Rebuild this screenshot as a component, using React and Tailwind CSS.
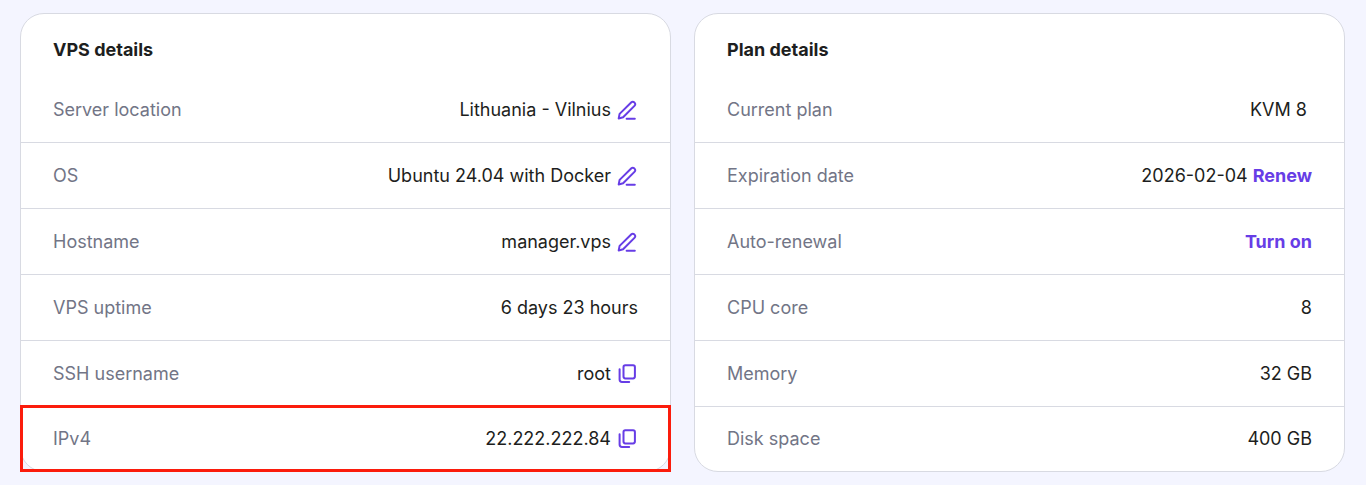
import React from "react";

const EditIcon = () => (
  <svg
    width="22"
    height="22"
    viewBox="0 0 22 22"
    fill="none"
    stroke="currentColor"
    strokeWidth="2"
    strokeLinecap="round"
    strokeLinejoin="round"
    aria-hidden="true"
  >
    <path d="M2.7 19.5 L3.6 14.9 L15.4 3.3 a1.9 1.9 0 0 1 2.7 0 l.6.6 a1.9 1.9 0 0 1 0 2.7 L7.1 18.3 Z" />
    <path d="M10.6 19.7 H18.8" />
  </svg>
);

const CopyIcon = () => (
  <svg
    width="22"
    height="22"
    viewBox="0 0 22 22"
    fill="none"
    stroke="currentColor"
    strokeWidth="2"
    strokeLinecap="round"
    strokeLinejoin="round"
    aria-hidden="true"
  >
    <rect x="7.5" y="2.2" width="11.4" height="13.2" rx="1.8" />
    <path d="M3.6 6.3 V16.6 a2.4 2.4 0 0 0 2.4 2.4 H13.2" />
  </svg>
);

const vpsDetails = [
  { label: "Server location", value: "Lithuania - Vilnius", icon: "edit" },
  { label: "OS", value: "Ubuntu 24.04 with Docker", icon: "edit" },
  { label: "Hostname", value: "manager.vps", icon: "edit" },
  { label: "VPS uptime", value: "6 days 23 hours" },
  { label: "SSH username", value: "root", icon: "copy" },
  { label: "IPv4", value: "22.222.222.84", icon: "copy", highlighted: true },
];

const planDetails = [
  { label: "Current plan", value: "KVM 8", spaced: true },
  { label: "Expiration date", value: "2026-02-04", action: "Renew" },
  { label: "Auto-renewal", action: "Turn on" },
  { label: "CPU core", value: "8" },
  { label: "Memory", value: "32 GB" },
  { label: "Disk space", value: "400 GB" },
];

const DetailRow = ({ item }) => (
  <div className="relative flex h-[66px] items-center justify-between border-b border-[#d8dae2] px-8 last:h-16 last:border-b-0">
    <dt className="text-[#727586]">{item.label}</dt>
    <dd className="flex items-center gap-[5px]">
      {item.value && <span className={item.spaced ? "pr-[5px]" : ""}>{item.value}</span>}
      {item.icon && (
        <button
          type="button"
          aria-label={`${item.icon === "edit" ? "Edit" : "Copy"} ${item.label}`}
          className="cursor-pointer text-[#673de6]"
        >
          {item.icon === "edit" ? <EditIcon /> : <CopyIcon />}
        </button>
      )}
      {item.action && (
        <button type="button" className="cursor-pointer font-bold text-[#673de6]">
          {item.action}
        </button>
      )}
    </dd>
    {/* Outline around the row */}
    {item.highlighted && (
      <div className="pointer-events-none absolute -inset-x-px -top-0.5 -bottom-px border-3 border-[#fb1c0c]" />
    )}
  </div>
);

const DetailsCard = ({ title, items }) => (
  <section className="rounded-3xl border border-[#d8dae2] bg-white">
    <h2 className="px-8 pt-6 pb-[15px] font-bold">{title}</h2>
    <dl>
      {items.map((item) => (
        <DetailRow key={item.label} item={item} />
      ))}
    </dl>
  </section>
);

const App = () => {
  return (
    <main className="min-h-screen bg-[#f4f5ff] py-[13px] pr-[21px] pl-5 font-['Inter',sans-serif] text-[18px] leading-6 text-[#1d1e20]">
      <div className="grid grid-cols-2 gap-[23px]">
        <DetailsCard title="VPS details" items={vpsDetails} />
        <DetailsCard title="Plan details" items={planDetails} />
      </div>
    </main>
  );
};

export default App;
